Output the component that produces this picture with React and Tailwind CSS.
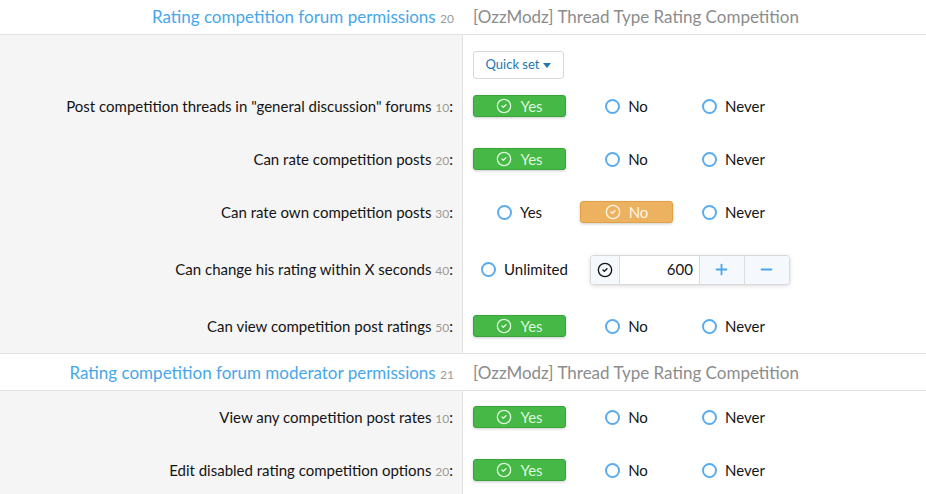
import React from 'react';
import { CircleCheck, Plus, Minus } from 'lucide-react';

const font = { fontFamily: '"Segoe UI", Lato, "Open Sans", sans-serif' };

function Radio({ label }) {
  return (
    <div className="flex items-center gap-2 text-[15px] text-[#141414]">
      <span className="w-[15px] h-[15px] rounded-full border-2 border-[#5aacee] bg-white" />
      <span>{label}</span>
    </div>
  );
}

function Picked({ label, color }) {
  const cls =
    color === 'green'
      ? 'bg-[#45b845] border-[#39a33a] text-[#dff7df]'
      : 'bg-[#edb25f] border-[#e2a047] text-[#fff6e6]';
  return (
    <div className={`w-[93px] h-[22px] flex items-center justify-center gap-2 rounded-[3px] border shadow-[0_1px_3px_rgba(0,0,0,0.2)] text-[15px] ${cls}`}>
      <CircleCheck size={16} strokeWidth={2} />
      <span>{label}</span>
    </div>
  );
}

function Slot({ children }) {
  return <div className="w-[93px] flex justify-center">{children}</div>;
}

function Choices({ value }) {
  return (
    <div className="flex gap-[14px]">
      {['Yes', 'No', 'Never'].map((o) => (
        <Slot key={o}>
          {o === value ? <Picked label={o} color={o === 'Yes' ? 'green' : 'orange'} /> : <Radio label={o} />}
        </Slot>
      ))}
    </div>
  );
}

function Label({ text, n }) {
  return (
    <div className="text-right pr-[9px] text-[15px] text-[#141414]">
      {text} <span className="text-[12px] text-[#9a9a9a]">{n}</span>:
    </div>
  );
}

function Row({ text, n, children, tall }) {
  return (
    <div className={`grid grid-cols-[463px_1fr] ${tall ? 'h-[61px]' : 'h-[53px]'}`}>
      <div className="bg-[#f5f5f5] border-r border-[#e0e0e0] flex items-center justify-end">
        <Label text={text} n={n} />
      </div>
      <div className="flex items-center pl-[10px]">{children}</div>
    </div>
  );
}

function Header({ title, n, h }) {
  return (
    <div className={`grid grid-cols-[463px_1fr] border-b border-[#e2e2e2] bg-white ${h}`}>
      <div className="flex items-center justify-end pr-[9px] text-[17px] text-[#47a7eb]">
        {title}&nbsp;<span className="text-[12px] text-[#9a9a9a] mt-[3px]">{n}</span>
      </div>
      <div className="flex items-center pl-[10px] text-[17px] text-[#8c8c8c]">
        [OzzModz] Thread Type Rating Competition
      </div>
    </div>
  );
}

function Spinbox() {
  return (
    <div className="flex h-[30px] w-[200px] rounded-[4px] border border-[#d8d8d8] shadow-[0_1px_4px_rgba(0,0,0,0.15)] overflow-hidden bg-white">
      <div className="w-[29px] flex items-center justify-center bg-[#f5f9fd] border-r border-[#dcdcdc] text-[#141414]">
        <CircleCheck size={16} strokeWidth={2} />
      </div>
      <div className="w-[79px] flex items-center justify-end pr-[6px] text-[15px] text-[#141414]">600</div>
      <div className="w-[45px] flex items-center justify-center bg-[#f5f9fd] border-l border-[#dcdcdc] text-[#47a7eb]">
        <Plus size={17} strokeWidth={2.5} />
      </div>
      <div className="flex-1 flex items-center justify-center bg-[#f5f9fd] border-l border-[#dcdcdc] text-[#47a7eb]">
        <Minus size={17} strokeWidth={2.5} />
      </div>
    </div>
  );
}

export default function App() {
  return (
    <div className="w-[926px] h-[494px] overflow-hidden bg-white" style={font}>
      <Header title="Rating competition forum permissions" n="20" h="h-[35px]" />
      <div className="grid grid-cols-[463px_1fr] h-[45px]">
        <div className="bg-[#f5f5f5] border-r border-[#e0e0e0]" />
        <div className="pl-[10px] pt-[16px]">
          <div className="w-[91px] h-[28px] flex items-center justify-center gap-1 rounded-[3px] border border-[#d8d8d8] text-[13px] text-[#2577b1]">
            Quick set
            <span className="w-0 h-0 border-l-[4px] border-r-[4px] border-t-[5px] border-l-transparent border-r-transparent border-t-[#2577b1]" />
          </div>
        </div>
      </div>
      <Row text={'Post competition threads in "general discussion" forums'} n="10">
        <Choices value="Yes" />
      </Row>
      <Row text="Can rate competition posts" n="20">
        <Choices value="Yes" />
      </Row>
      <Row text="Can rate own competition posts" n="30">
        <Choices value="No" />
      </Row>
      <Row text="Can change his rating within X seconds" n="40" tall>
        <div className="flex items-center">
          <div className="pl-[8px] pr-[22px]">
            <Radio label="Unlimited" />
          </div>
          <Spinbox />
        </div>
      </Row>
      <Row text="Can view competition post ratings" n="50">
        <Choices value="Yes" />
      </Row>
      <div className="border-t border-[#e2e2e2]" />
      <Header title="Rating competition forum moderator permissions" n="21" h="h-[37px] pt-[2px]" />
      <Row text="View any competition post rates" n="10">
        <Choices value="Yes" />
      </Row>
      <Row text="Edit disabled rating competition options" n="20">
        <Choices value="Yes" />
      </Row>
    </div>
  );
}
